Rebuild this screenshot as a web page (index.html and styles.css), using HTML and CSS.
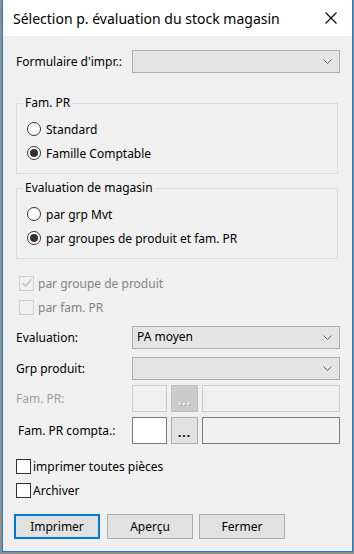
FILE: index.html
```html
<!DOCTYPE html>
<html lang="fr">
<head>
    <meta charset="UTF-8">
    <title>Sélection p. évaluation du stock magasin</title>
    <link rel="stylesheet" href="styles.css">
</head>
<body>
    <div class="window">
        <div class="titlebar">
            <span class="title">Sélection p. évaluation du stock magasin</span>
            <svg class="close" width="12" height="12" viewBox="0 0 12 12">
                <path d="M0.5 0.5 L11.5 11.5 M11.5 0.5 L0.5 11.5" stroke="#000" stroke-width="1.1" fill="none"/>
            </svg>
        </div>
        <div class="content">
            <div class="field">
                <span class="field-label">Formulaire d'impr.:</span>
                <div class="combo">
                    <span></span>
                    <svg class="chevron" width="9" height="5" viewBox="0 0 9 5"><path d="M0.5 0.5 L4.5 4.5 L8.5 0.5" stroke="#606060" fill="none"/></svg>
                </div>
            </div>

            <fieldset class="group group-first">
                <legend>Fam. PR</legend>
                <div class="option"><span class="radio"></span>Standard</div>
                <div class="option"><span class="radio checked"></span>Famille Comptable</div>
            </fieldset>

            <fieldset class="group">
                <legend>Evaluation de magasin</legend>
                <div class="option"><span class="radio"></span>par grp Mvt</div>
                <div class="option"><span class="radio checked"></span>par groupes de produit et fam. PR</div>
            </fieldset>

            <div class="checks disabled">
                <div class="option">
                    <span class="box">
                        <svg width="12" height="12" viewBox="0 0 12 12"><path d="M1.5 6 L4.5 9 L10.5 2.5" stroke="#c2c2c2" stroke-width="1.3" fill="none"/></svg>
                    </span>par groupe de produit
                </div>
                <div class="option"><span class="box"></span>par fam. PR</div>
            </div>

            <div class="field field-eval">
                <span class="field-label">Evaluation:</span>
                <div class="combo">
                    <span class="combo-text">PA moyen</span>
                    <svg class="chevron" width="9" height="5" viewBox="0 0 9 5"><path d="M0.5 0.5 L4.5 4.5 L8.5 0.5" stroke="#606060" fill="none"/></svg>
                </div>
            </div>
            <div class="field field-grp">
                <span class="field-label">Grp produit:</span>
                <div class="combo">
                    <span></span>
                    <svg class="chevron" width="9" height="5" viewBox="0 0 9 5"><path d="M0.5 0.5 L4.5 4.5 L8.5 0.5" stroke="#606060" fill="none"/></svg>
                </div>
            </div>
            <div class="field field-tall is-disabled">
                <span class="field-label">Fam. PR:</span>
                <span class="textbox small"></span>
                <span class="dots">...</span>
                <span class="textbox wide"></span>
            </div>
            <div class="field field-tall">
                <span class="field-label indent">Fam. PR compta.:</span>
                <span class="textbox small"></span>
                <span class="dots">...</span>
                <span class="textbox wide"></span>
            </div>

            <div class="checks checks-bottom">
                <div class="option"><span class="box"></span>imprimer toutes pièces</div>
                <div class="option"><span class="box"></span>Archiver</div>
            </div>

            <div class="buttons">
                <button class="default">Imprimer</button>
                <button>Aperçu</button>
                <button class="last">Fermer</button>
            </div>
        </div>
    </div>
</body>
</html>
```

FILE: styles.css
```css
body {
    margin: 0;
    background-color: #8e8e8e;
    font-family: "Noto Sans", sans-serif;
    font-size: 12px;
    color: #000;
    height: 554px;
    overflow: hidden;
}
.window {
    margin-left: 2px;
    width: 349px;
    border: 1px solid #1a7fd4;
    border-top: none;
    background-color: #f0f0f0;
}
.titlebar {
    height: 36px;
    background-color: #fff;
    display: flex;
    align-items: center;
    justify-content: space-between;
    padding: 0 15px 0 10px;
}
.title {
    font-size: 14px;
    margin-top: 1px;
}
.content {
    height: 515px;
    box-sizing: border-box;
    padding: 14px 12px 0 13px;
}
.field {
    display: flex;
    align-items: center;
    height: 23px;
}
.field-label {
    width: 116px;
    flex: none;
}
.field-label.indent {
    padding-left: 2px;
    box-sizing: border-box;
}
.combo {
    flex: 1;
    height: 23px;
    box-sizing: border-box;
    border: 1px solid #adadad;
    background-color: #e5e5e5;
    display: flex;
    align-items: center;
    justify-content: space-between;
    padding: 0 7px 0 4px;
}
.combo-text {
    margin-top: -3px;
}
.group {
    margin: 6px 2px 0 0;
    padding: 6px 0 8px 6px;
    border: 1px solid #dcdcdc;
    min-width: 0;
}
.group-first {
    margin-top: 22px;
}
.group legend {
    padding: 0 2px;
    line-height: 16px;
}
.option {
    display: flex;
    align-items: center;
    height: 24px;
}
.group .option {
    padding-left: 4px;
}
.radio {
    width: 14px;
    height: 14px;
    box-sizing: border-box;
    border: 1px solid #333;
    border-radius: 50%;
    background-color: #fff;
    margin-right: 5px;
    display: flex;
    align-items: center;
    justify-content: center;
}
.radio.checked::after {
    content: "";
    width: 8px;
    height: 8px;
    border-radius: 50%;
    background-color: #333;
}
.checks {
    margin-top: 12px;
}
.checks.disabled {
    color: #838383;
    padding-left: 3px;
}
.box {
    width: 15px;
    height: 15px;
    box-sizing: border-box;
    border: 1px solid #333;
    background-color: #fff;
    margin-right: 2px;
    display: flex;
    align-items: center;
    justify-content: center;
}
.checks.disabled .box {
    border-color: #cccccc;
    background-color: #f0f0f0;
    margin-right: 4px;
}
.field-eval {
    margin-top: 7px;
}
.field-grp {
    margin-top: 8px;
}
.field-tall {
    height: 27px;
    margin-top: 5px;
}
.textbox {
    height: 27px;
    box-sizing: border-box;
    border: 1px solid #7a7a7a;
}
.textbox.small {
    width: 35px;
    background-color: #fff;
}
.textbox.wide {
    flex: 1;
    margin-left: 4px;
    background-color: #f0f0f0;
}
.dots {
    width: 27px;
    height: 27px;
    box-sizing: border-box;
    margin-left: 4px;
    border: 1px solid #adadad;
    background-color: #e1e1e1;
    text-align: center;
    font-weight: bold;
    line-height: 29px;
    letter-spacing: 1px;
}
.is-disabled .field-label {
    color: #a0a0a0;
}
.is-disabled .textbox {
    border-color: #cccccc;
    background-color: #f0f0f0;
}
.is-disabled .dots {
    border-color: #bfbfbf;
    background-color: #cccccc;
    color: #f4f4f4;
    text-shadow: 1px 1px #a8a8a8;
}
.checks-bottom {
    margin-top: 10px;
}
.buttons {
    display: flex;
    margin: 12px 0 0 -2px;
}
button {
    width: 86px;
    height: 25px;
    box-sizing: border-box;
    border: 1px solid #adadad;
    background-color: #e1e1e1;
    font-family: "Noto Sans", sans-serif;
    font-size: 12px;
    color: #000;
    padding: 0;
    margin-right: 7px;
}
button.default {
    border: 2px solid #0078d7;
}
button.last {
    margin-left: -1px;
}
```
